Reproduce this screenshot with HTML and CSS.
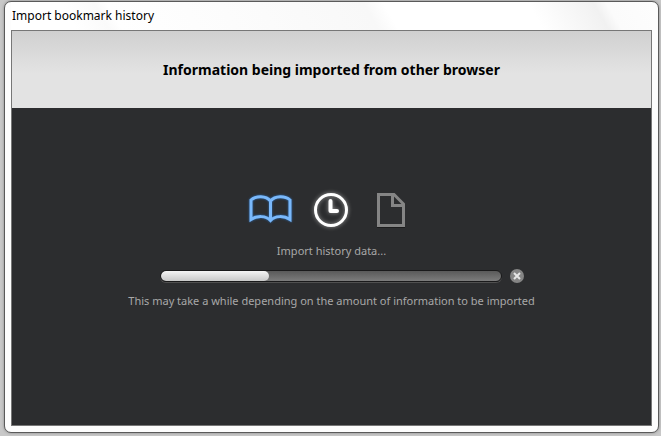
FILE: index.html
```html
<!DOCTYPE html>
<html lang="en">
<head>
  <meta charset="UTF-8" />
  <meta name="viewport" content="width=device-width, initial-scale=1.0"/>
  <title>Import bookmark history</title>
  <link rel="stylesheet" href="styles.css">
</head>
<body>
  <div id="window">
    <div id="titleBar">Import bookmark history</div>
    <div id="content">
      <header>
        <h1>Information being imported from other browser</h1>
      </header>
      <main>
        <div id="steps">
          <svg class="icon book" width="44" height="34" viewBox="0 0 44 34">
            <path d="M21.5 8C17 2.500 7 2.500 2 7V26.500C8 22.500 17 22.500 21.500 27.500C26 22.500 35 22.500 41 26.500V7C36 2.500 26 2.500 21.500 8V28"/>
          </svg>
          <svg class="icon clock" width="36" height="36" viewBox="0 0 36 36">
            <circle cx="18" cy="18" r="15.5"/>
            <path class="hands" d="M17.5 9V19H24"/>
          </svg>
          <svg class="icon file" width="30" height="36" viewBox="0 0 30 36">
            <path class="shade" d="M1 35.5H29"/>
            <path d="M2.5 2.5H18L27.5 12V33.5H2.5ZM16.5 2.5V13.5H27.5"/>
          </svg>
        </div>
        <label id="status" for="progress">Import history data...</label>
        <div id="progressRow">
          <progress id="progress" value="32" max="100"></progress>
          <button id="cancelButton" type="button" aria-label="Cancel">
            <svg width="14" height="14" viewBox="0 0 14 14">
              <path d="M4 4L10 10M10 4L4 10"/>
            </svg>
          </button>
        </div>
        <p id="note">This may take a while depending on the amount of information to be imported</p>
      </main>
    </div>
  </div>
</body>
</html>
```

FILE: styles.css
```css
* {
  box-sizing: border-box;
}
body {
  display: flex;
  height: 100vh;
  margin: 0;
  padding: 1px 2px 3px 4px;
  font-family: "Noto Sans", "Open Sans", sans-serif;
  background-color: #c8c8c8;
}

#window {
  flex: 1;
  display: flex;
  flex-direction: column;
  padding: 0 6px 6px;
  border: 1px solid #5a5a5a;
  border-radius: 7px;
  background-color: #fdfdfd;
  box-shadow: 0 0 3px #888;
}
/* glass reflections run across the title bar */
#titleBar {
  height: 28px;
  line-height: 27px;
  padding-left: 1px;
  font-size: 12px;
  color: black;
  background: linear-gradient(60deg, white 10%, #fafafa 15%, white 17%, #fbfbfb 40%, #f8f8f8 56%, white 59%, white 81%, #f1f1f1 91%, #fbfbfb 93%, #fdfdfd);
}

#content {
  flex: 1;
  display: flex;
  flex-direction: column;
  border: 1px solid #777;
  background-color: #2c2d2f;
}
header {
  height: 77px;
  background: linear-gradient(#d0d0d0, #e3e3e3 55%, #e3e3e3);
}
h1 {
  margin: 0;
  line-height: 77px;
  font-size: 14px;
  text-align: center;
  color: black;
}
main {
  flex: 1;
  display: flex;
  flex-direction: column;
  align-items: center;
  padding-top: 84px;
  font-size: 11px;
  color: #a8a8a8;
}

/* import steps */
#steps {
  display: flex;
  align-items: center;
  gap: 20px;
  padding-right: 8px;
}
.icon {
  display: block;
  fill: none;
  overflow: visible;
}
.book {
  stroke: #7ab8fa;
  stroke-width: 3;
  filter: drop-shadow(0 0 1px #2b6cb5);
}
.clock {
  stroke: white;
  stroke-width: 3;
  filter: drop-shadow(0 0 2px #999);
}
.clock .hands {
  stroke-width: 4;
  stroke-linecap: round;
  stroke-linejoin: round;
}
.file {
  margin-left: 7px;
  stroke: #858585;
  stroke-width: 3;
}
.file .shade {
  stroke: #1c1c1d;
  stroke-width: 1;
}

#status {
  margin-top: 14px;
  line-height: 18px;
}
#progressRow {
  display: flex;
  align-items: center;
  gap: 8px;
  margin-top: 9px;
  padding-left: 20px;
}
progress {
  appearance: none;
  display: block;
  width: 342px;
  height: 12px;
  border: 1px solid #1a1a1b;
  border-radius: 6px;
  overflow: hidden;
  background: linear-gradient(#5a5a5a, #7c7c7c);
  box-shadow: 0 1px 0 #505050;
}
progress::-webkit-progress-bar {
  background: transparent;
}
progress::-webkit-progress-value {
  border-radius: 5px;
  background: linear-gradient(#f4f4f4, #c8c8c8);
}
#cancelButton {
  width: 14px;
  height: 14px;
  padding: 0;
  border: none;
  border-radius: 50%;
  background-color: #858585;
  cursor: pointer;
}
#cancelButton svg {
  display: block;
  stroke: #e6e6e6;
  stroke-width: 2;
}
#note {
  margin: 10px 0 0;
  line-height: 16px;
}
```
